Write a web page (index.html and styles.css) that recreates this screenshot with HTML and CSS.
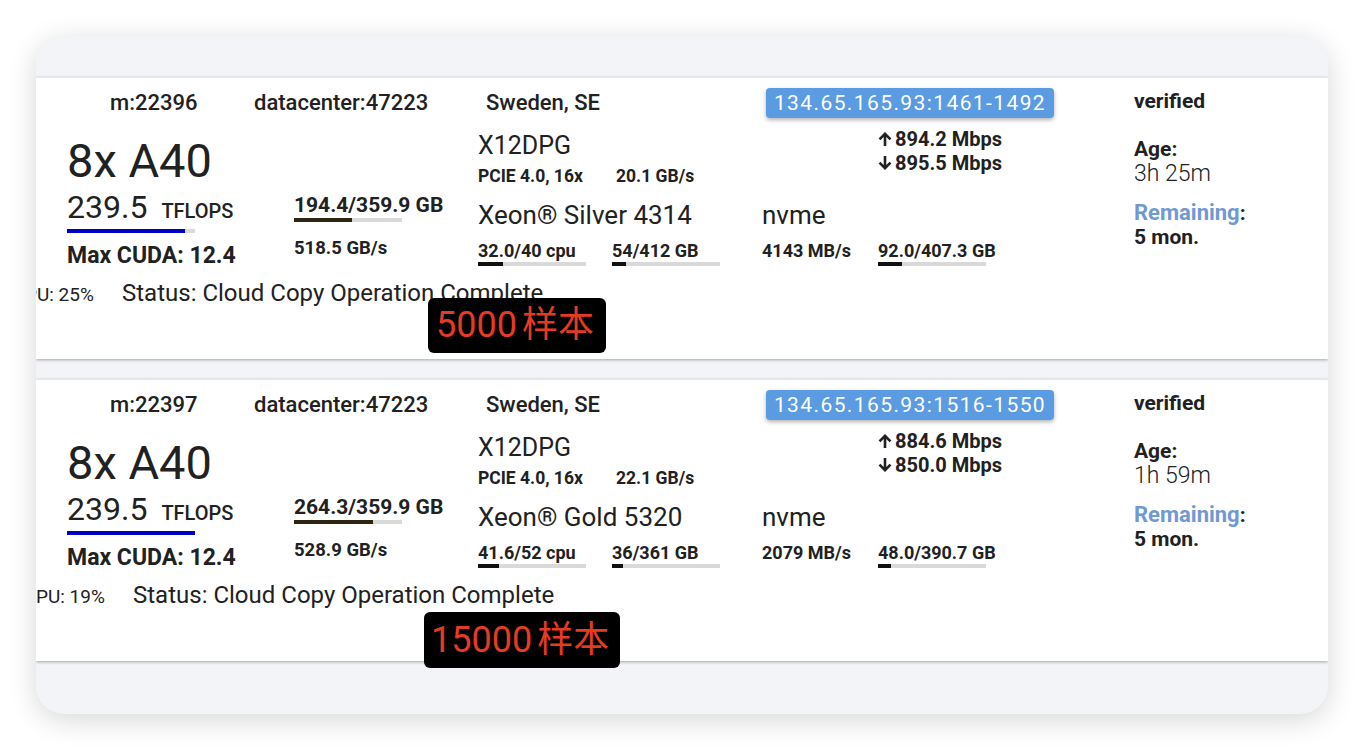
FILE: index.html
```html
<!DOCTYPE html>
<html lang="en">
  <head>
    <meta charset="UTF-8" />
    <meta name="viewport" content="width=device-width, initial-scale=1.0" />
    <title>Instances</title>
    <link rel="stylesheet" href="styles.css">
  </head>
  <body>
    <div class="card">
      <!-- first machine -->
      <div class="row">
        <div class="head">
          <span class="mid">m:22396</span>
          <span class="dc">datacenter:47223</span>
          <span class="loc">Sweden, SE</span>
          <span class="ip">134.65.165.93:1461-1492</span>
          <span class="verified">verified</span>
        </div>
        <div class="body">
          <div class="gpu">
            <div class="gpu-name">8x A40</div>
            <div class="flops"><span class="flops-num">239.5</span><span class="flops-unit">TFLOPS</span></div>
            <div class="bar bar-flops"><div class="fill" style="width:92%"></div></div>
            <div class="cuda">Max CUDA: 12.4</div>
          </div>
          <div class="mem">
            <div class="mem-used">194.4/359.9 GB</div>
            <div class="bar bar-mem"><div class="fill" style="width:54%"></div></div>
            <div class="mem-bw">518.5 GB/s</div>
          </div>
          <div class="sys">
            <div class="sys-top">
              <div class="board">
                <div class="board-name">X12DPG</div>
                <div class="pcie"><span class="pcie-gen">PCIE 4.0, 16x</span><span>20.1 GB/s</span></div>
              </div>
              <div class="net">
                <div><svg class="arrow" viewBox="0 0 14 14"><path d="M7 14V2M1.5 7.3L7 1.8l5.5 5.5"/></svg>894.2 Mbps</div>
                <div><svg class="arrow" viewBox="0 0 14 14"><path d="M7 0v12M1.5 6.7L7 12.2l5.5-5.5"/></svg>895.5 Mbps</div>
              </div>
            </div>
            <div class="sys-mid">
              <div class="cpu-cell">Xeon® Silver 4314</div>
              <div class="disk-name">nvme</div>
            </div>
            <div class="sys-low">
              <div class="stat stat-cpu">32.0/40 cpu<div class="bar"><div class="fill" style="width:23%"></div></div></div>
              <div class="stat stat-ram">54/412 GB<div class="bar"><div class="fill" style="width:13%"></div></div></div>
              <div class="stat stat-bw">4143 MB/s</div>
              <div class="stat">92.0/407.3 GB<div class="bar"><div class="fill" style="width:22%"></div></div></div>
            </div>
          </div>
          <div class="meta">
            <div class="meta-label age-label">Age:</div>
            <div class="age">3h 25m</div>
            <div class="meta-label rem-label"><span class="rem">Remaining</span>:</div>
            <div class="meta-label rem-value">5 mon.</div>
          </div>
        </div>
        <div class="load">
          <span class="gpu-util">GPU: 25%</span>
          <span class="status">Status: Cloud Copy Operation Complete</span>
        </div>
        <div class="tag tag-a">5000<span class="tag-word">样本</span></div>
      </div>

      <!-- second machine -->
      <div class="row">
        <div class="head">
          <span class="mid">m:22397</span>
          <span class="dc">datacenter:47223</span>
          <span class="loc">Sweden, SE</span>
          <span class="ip">134.65.165.93:1516-1550</span>
          <span class="verified">verified</span>
        </div>
        <div class="body">
          <div class="gpu">
            <div class="gpu-name">8x A40</div>
            <div class="flops"><span class="flops-num">239.5</span><span class="flops-unit">TFLOPS</span></div>
            <div class="bar bar-flops"><div class="fill" style="width:100%"></div></div>
            <div class="cuda">Max CUDA: 12.4</div>
          </div>
          <div class="mem">
            <div class="mem-used">264.3/359.9 GB</div>
            <div class="bar bar-mem"><div class="fill" style="width:73%"></div></div>
            <div class="mem-bw">528.9 GB/s</div>
          </div>
          <div class="sys">
            <div class="sys-top">
              <div class="board">
                <div class="board-name">X12DPG</div>
                <div class="pcie"><span class="pcie-gen">PCIE 4.0, 16x</span><span>22.1 GB/s</span></div>
              </div>
              <div class="net">
                <div><svg class="arrow" viewBox="0 0 14 14"><path d="M7 14V2M1.5 7.3L7 1.8l5.5 5.5"/></svg>884.6 Mbps</div>
                <div><svg class="arrow" viewBox="0 0 14 14"><path d="M7 0v12M1.5 6.7L7 12.2l5.5-5.5"/></svg>850.0 Mbps</div>
              </div>
            </div>
            <div class="sys-mid">
              <div class="cpu-cell">Xeon® Gold 5320</div>
              <div class="disk-name">nvme</div>
            </div>
            <div class="sys-low">
              <div class="stat stat-cpu">41.6/52 cpu<div class="bar"><div class="fill" style="width:19%"></div></div></div>
              <div class="stat stat-ram">36/361 GB<div class="bar"><div class="fill" style="width:10%"></div></div></div>
              <div class="stat stat-bw">2079 MB/s</div>
              <div class="stat">48.0/390.7 GB<div class="bar"><div class="fill" style="width:12%"></div></div></div>
            </div>
          </div>
          <div class="meta">
            <div class="meta-label age-label">Age:</div>
            <div class="age">1h 59m</div>
            <div class="meta-label rem-label"><span class="rem">Remaining</span>:</div>
            <div class="meta-label rem-value">5 mon.</div>
          </div>
        </div>
        <div class="load load-b">
          <span class="gpu-util">GPU: 19%</span>
          <span class="status">Status: Cloud Copy Operation Complete</span>
        </div>
        <div class="tag tag-b">15000<span class="tag-word">样本</span></div>
      </div>
    </div>
  </body>
</html>
```

FILE: styles.css
```css
body {
  margin: 0;
  background: #ffffff;
  font-family: Roboto, "Noto Sans", "Noto Sans CJK SC", sans-serif;
  color: #212121;
}
.card {
  margin: 36px;
  width: 1292px;
  height: 678px;
  box-sizing: border-box;
  padding-top: 41px;
  background: #f3f4f8;
  border-radius: 28px;
  overflow: hidden;
  box-shadow: 0 6px 28px rgba(0, 0, 0, 0.16);
}
.row {
  position: relative;
  height: 282px;
  box-sizing: border-box;
  margin-bottom: 20px;
  padding-left: 31px;
  background: #ffffff;
  border-top: 1px solid #e6e7ec;
  box-shadow: 0 1px 3px rgba(0, 0, 0, 0.32);
}

/* header line */
.head {
  display: flex;
  align-items: center;
  height: 49px;
  font-size: 22px;
  font-weight: 500;
}
.mid {
  margin-left: 43px;
  width: 144px;
}
.dc {
  width: 232px;
}
.loc {
  width: 280px;
}
.ip {
  box-sizing: border-box;
  width: 288px;
  height: 30px;
  line-height: 30px;
  text-align: center;
  background: #5a9be2;
  color: #ffffff;
  font-size: 21px;
  font-weight: 400;
  letter-spacing: 1.4px;
  border-radius: 4px;
  box-shadow: 0 2px 4px rgba(0, 0, 0, 0.3);
}
.verified {
  margin-left: 80px;
  margin-top: -4px;
  font-size: 21px;
  font-weight: 700;
}

/* body columns */
.body {
  display: flex;
}
.gpu {
  width: 227px;
}
.gpu-name {
  margin-top: 10px;
  font-size: 47px;
  line-height: 48px;
}
.flops {
  display: flex;
  align-items: baseline;
  height: 32px;
  margin-top: 6px;
  line-height: 32px;
}
.flops-num {
  font-size: 32px;
}
.flops-unit {
  margin-left: 14px;
  font-size: 20px;
  font-weight: 500;
}
.bar {
  height: 4px;
  background: #d9d9d9;
}
.fill {
  height: 100%;
  background: #111111;
}
.bar-flops {
  width: 128px;
  margin-top: 6px;
}
.bar-flops .fill {
  background: #0000c4;
}
.cuda {
  margin-top: 12px;
  font-size: 23px;
  line-height: 22px;
  font-weight: 700;
}
.mem {
  width: 184px;
}
.mem-used {
  margin-top: 68px;
  font-size: 21px;
  line-height: 21px;
  font-weight: 700;
}
.bar-mem {
  width: 108px;
  margin-top: 2px;
}
.bar-mem .fill {
  background: #2e2510;
}
.mem-bw {
  margin-top: 17px;
  font-size: 18.5px;
  line-height: 18px;
  font-weight: 700;
}

.sys {
  width: 656px;
}
.sys-top {
  display: flex;
  height: 58px;
}
.board {
  width: 400px;
}
.board-name {
  margin-top: 6px;
  font-size: 25px;
  line-height: 25px;
}
.pcie {
  display: flex;
  margin-top: 10px;
  font-size: 17.5px;
  line-height: 17px;
  font-weight: 700;
}
.pcie-gen {
  width: 138px;
}
.net {
  font-size: 20px;
  line-height: 24px;
  font-weight: 700;
}
.arrow {
  width: 14px;
  height: 14px;
  margin-right: 3px;
  fill: none;
  stroke: #212121;
  stroke-width: 2.6;
}
.sys-mid {
  display: flex;
  margin-top: 18px;
  font-size: 26px;
  line-height: 25px;
}
.cpu-cell {
  width: 284px;
  white-space: nowrap;
}
.sys-low {
  display: flex;
  margin-top: 14px;
  font-size: 18px;
  line-height: 17px;
  font-weight: 700;
}
.stat {
  width: 256px;
}
.stat .bar {
  width: 108px;
  margin-top: 3px;
}
.stat-cpu {
  width: 134px;
}
.stat-ram {
  width: 150px;
}
.stat-bw {
  width: 116px;
}

.meta {
  font-size: 21px;
  line-height: 21px;
}
.meta-label {
  font-weight: 700;
}
.age-label {
  margin-top: 12px;
}
.age {
  margin-top: 2px;
  font-size: 23px;
  line-height: 23px;
  font-weight: 300;
}
.rem-label {
  margin-top: 17px;
}
.rem {
  color: #7099d2;
  font-size: 22px;
}
.rem-value {
  margin-top: 3px;
}

/* status line */
.load {
  display: flex;
  align-items: baseline;
  margin-top: 15px;
  margin-left: -55px;
  line-height: 23px;
}
.load-b {
  margin-left: -44px;
}
.gpu-util {
  width: 110px;
  font-size: 19px;
}
.status {
  font-size: 24px;
}

/* sample count overlay */
.tag {
  position: absolute;
  height: 55px;
  line-height: 55px;
  padding: 0 12px 0 8px;
  background: #000000;
  color: #e53b22;
  font-family: Roboto, "Noto Sans CJK SC", sans-serif;
  font-size: 36px;
  border-radius: 6px;
  white-space: nowrap;
}
.tag-word {
  margin-left: 5px;
}
.tag-a {
  left: 392px;
  top: 220px;
}
.tag-b {
  left: 388px;
  top: 232px;
  height: 56px;
  line-height: 56px;
  padding: 0 11px 0 7px;
}
```
